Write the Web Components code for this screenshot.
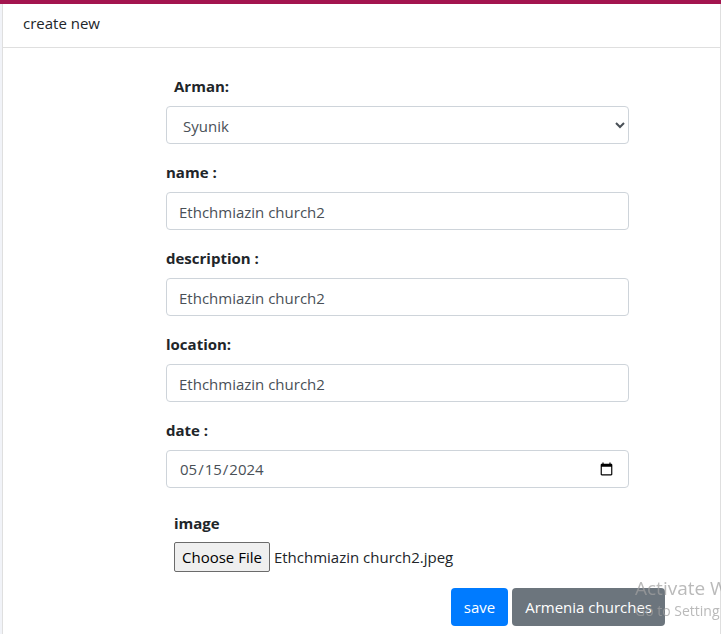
<!DOCTYPE html>
<html lang="en-US">
<head>
<meta charset="utf-8">
<title>create new</title>
<style>
  html, body { height: 100%; }
  body { margin: 0; overflow: hidden; background: #f1f3f8; color: #212529; font: 15px/24px "Open Sans", "Noto Sans", sans-serif; }
</style>
</head>
<body>
<church-page></church-page>
<script>
const box = `
  *, *::before, *::after { box-sizing: border-box; }
  label { display: block; font-weight: 700; font-size: 15px; line-height: 24px; margin-bottom: 8px; }
  .control { display: block; width: 100%; height: 38px; margin: 0; padding: 7px 12px 5px; border: 1px solid #ced4da;
    border-radius: 4px; background: #fff; color: #495057; font: inherit; line-height: 24px; }
  .control[type="date"] { padding: 6px 12px; }`;

function define(name, css, html, setup) {
  customElements.define(name, class extends HTMLElement {
    constructor() {
      super();
      const root = this.attachShadow({ mode: 'open' });
      root.innerHTML = `<style>${box}${css}</style>${html}`;
    }
    connectedCallback() { if (setup) setup(this, this.shadowRoot); }
  });
}

define('form-card', `
  :host { display: flex; flex-direction: column; flex: 1; margin-left: 2px; background: #fff; border: 1px solid #dfdfdf; border-top: 0; border-bottom: 0; }
  header { padding: 7px 20px 12px; border-bottom: 1px solid #dfdfdf; }
  .body { padding: 26px 0 20px; }`,
  `<header><slot name="title"></slot></header><div class="body"><slot></slot></div>`);

define('text-field', `:host { display: block; margin-bottom: 16px; }`,
  `<label for="f"></label><input class="control" id="f">`,
  (host, root) => {
    root.querySelector('label').textContent = host.getAttribute('label');
    const input = root.querySelector('input');
    input.type = host.getAttribute('type') || 'text';
    input.value = host.getAttribute('value');
  });

define('region-select', `
  :host { display: block; margin-bottom: 16px; }
  label { padding-left: 8px; }`,
  `<label for="s">Arman:</label><select class="control" id="s"><option>Syunik</option></select>`);

define('file-field', `
  :host { display: block; padding: 7px 8px 0; margin-bottom: 16px; }
  label { margin-bottom: 7px; }
  input { display: block; width: 100%; font: inherit; line-height: 24px; color: #212529; }
  input::file-selector-button { font: inherit; line-height: 24px; height: 30px; margin: 0 4px 0 0; padding: 1px 7px; border: 1px solid #6b6b6b; border-radius: 2px; background: #efefef; color: #000; }`,
  `<label for="i">image</label><input type="file" id="i" accept="image/*">`,
  (host, root) => {
    const transfer = new DataTransfer();
    transfer.items.add(new File([''], host.getAttribute('filename'), { type: 'image/jpeg' }));
    root.querySelector('input').files = transfer.files;
  });

define('action-button', `
  :host { display: block; }
  button { display: block; height: 38px; padding: 6px 12px; border: 1px solid transparent; border-radius: 4px;
    background: var(--fill); color: #fff; font: inherit; line-height: 24px; white-space: nowrap; }`,
  `<button type="button"><slot></slot></button>`);

define('activation-note', `
  :host { position: fixed; right: 0; bottom: 13px; width: 86px; overflow: hidden; white-space: nowrap; color: rgba(160,160,160,.72); pointer-events: none; }
  p { margin: 0; font-size: 14px; line-height: 20px; }
  .head { font-size: 19px; line-height: 26px; }`,
  `<p class="head">Activate W</p><p>Go to Setting</p>`);

define('church-page', `
  :host { display: flex; flex-direction: column; min-height: 100%; border-top: 4px solid #a3154f; }
  form { display: grid; grid-template-columns: 163fr 463fr 91fr; }
  .fields { grid-column: 2; }
  .actions { grid-column: 1 / -1; display: flex; justify-content: flex-end; gap: 4px; padding-right: 55px; }
  .save { --fill: #007bff; }
  .back { --fill: #6c757d; }`,
  `<form-card>
    <span slot="title">create new</span>
    <form>
      <div class="fields">
        <region-select></region-select>
        <text-field label="name :" value="Ethchmiazin church2"></text-field>
        <text-field label="description :" value="Ethchmiazin church2"></text-field>
        <text-field label="location:" value="Ethchmiazin church2"></text-field>
        <text-field label="date :" type="date" value="2024-05-15"></text-field>
        <file-field filename="Ethchmiazin church2.jpeg"></file-field>
      </div>
      <div class="actions">
        <action-button class="save">save</action-button>
        <action-button class="back">Armenia churches</action-button>
      </div>
    </form>
  </form-card>
  <activation-note></activation-note>`);
</script>
</body>
</html>
